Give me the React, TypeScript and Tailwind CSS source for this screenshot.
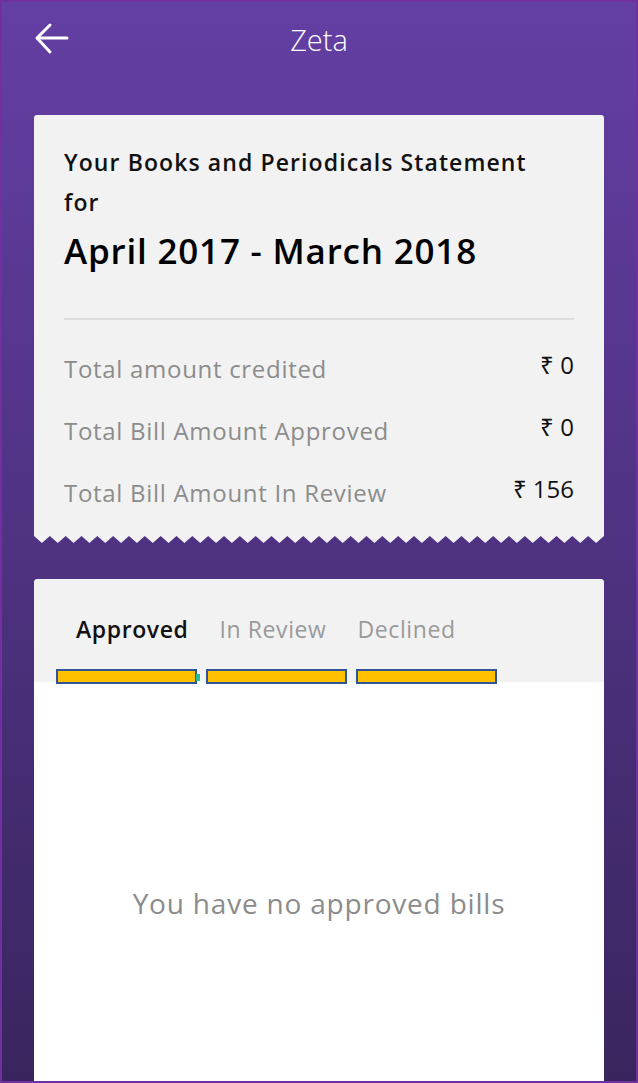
import { useState } from "react";

const rows = [
  { label: "Total amount credited", value: "0" },
  { label: "Total Bill Amount Approved", value: "0" },
  { label: "Total Bill Amount In Review", value: "156" },
];

const tabs = ["Approved", "In Review", "Declined"];

// torn-paper edge under the statement card
function Zigzag() {
  const teeth = 36;
  const w = 570;
  const step = w / teeth;
  let pts = "0,0 0,1";
  for (let i = 0; i < teeth; i++) {
    pts += ` ${(i + 0.5) * step},8 ${(i + 1) * step},1`;
  }
  pts += ` ${w},0`;
  return (
    <svg width={w} height={8} className="block" viewBox={`0 0 ${w} 8`}>
      <polygon points={pts} fill="#f2f2f2" />
    </svg>
  );
}

export default function App() {
  const [active, setActive] = useState(0);

  return (
    <div
      className="w-[638px] h-[1083px] border-2 border-[#7030a0] bg-gradient-to-b from-[#643fa4] via-[#4f3282] to-[#39255e] flex flex-col overflow-hidden"
      style={{ fontFamily: '"Open Sans", sans-serif' }}
    >
      {/* header */}
      <div className="relative h-[80px] flex items-center justify-center">
        <button className="absolute left-[32px] top-[20px] text-white">
          <svg width="36" height="34" viewBox="0 0 36 34" fill="none" stroke="white" strokeWidth="3" strokeLinecap="round" strokeLinejoin="round">
            <path d="M33 16H4" />
            <path d="M16 3L3 16l13 14" />
          </svg>
        </button>
        <span className="text-white text-[29px] font-light -mt-[4px]">Zeta</span>
      </div>

      {/* statement card */}
      <div className="mx-[32px] mt-[33px]">
        <div className="bg-[#f2f2f2] rounded-t-[3px] px-[30px] pt-[27px] pb-[20px]">
          <p className="text-[23px] leading-[40px] font-semibold text-[#111] tracking-[1.1px]">
            Your Books and Periodicals Statement
            <br />
            for
          </p>
          <h1 className="text-[35px] font-semibold text-black mt-[5px] leading-[48px] tracking-[0.8px]">April 2017 - March 2018</h1>
          <div className="h-[2px] bg-[#dddddd] mt-[43px]" />
          <div className="mt-[27px] flex flex-col gap-[18px]">
            {rows.map((r) => (
              <div key={r.label} className="flex justify-between items-start">
                <span className="text-[24px] leading-[44px] text-[#8c8c8c] tracking-[0.7px]">{r.label}</span>
                <span className="text-[24px] leading-[36px] text-[#111]">₹ {r.value}</span>
              </div>
            ))}
          </div>
        </div>
        <Zigzag />
      </div>

      {/* bills card */}
      <div className="mx-[32px] mt-[36px] flex-1 bg-white rounded-t-[4px] overflow-hidden flex flex-col">
        <div className="bg-[#f2f2f2] h-[103px] relative">
          <div className="flex gap-[31px] pl-[42px] pt-[33px]">
            {tabs.map((t, i) => (
              <button
                key={t}
                onClick={() => setActive(i)}
                className={`text-[23px] tracking-[0.6px] ${i === active ? "font-semibold text-[#111]" : "text-[#9a9a9a]"}`}
              >
                {t}
              </button>
            ))}
          </div>
          <div className="absolute left-[22px] top-[90px] flex gap-[9px] items-center">
            <div className="w-[141px] h-[15px] bg-[#ffc000] border-2 border-[#2f5597]" />
            <div className="w-[141px] h-[15px] bg-[#ffc000] border-2 border-[#2f5597]" />
            <div className="w-[141px] h-[15px] bg-[#ffc000] border-2 border-[#2f5597]" />
          </div>
          <div className="absolute left-[162px] top-[95px] w-[4px] h-[7px] bg-[#1fbf99]" />
        </div>
        <div className="flex-1 flex justify-center pt-[200px]">
          <span className="text-[28px] text-[#8c8c8c] tracking-[0.8px]">You have no {tabs[active].toLowerCase()} bills</span>
        </div>
      </div>
    </div>
  );
}
